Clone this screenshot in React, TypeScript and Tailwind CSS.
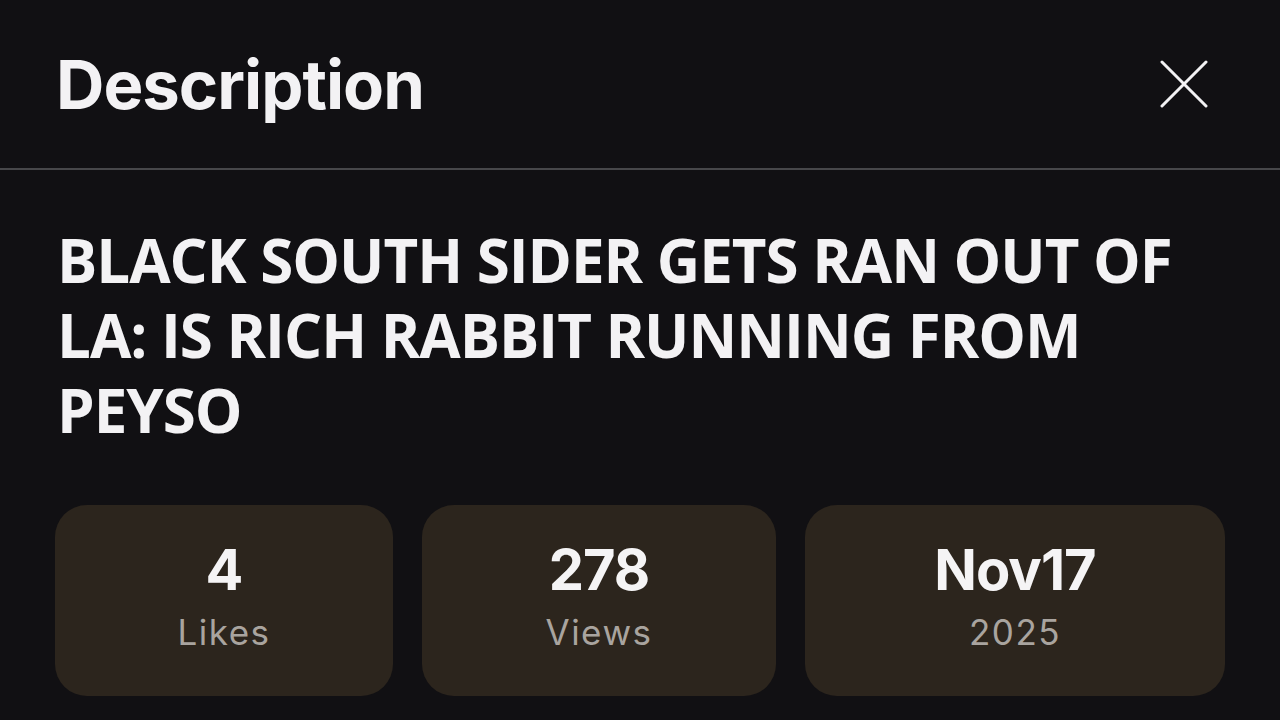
import React from "react";

const stats = [
  { value: "4", label: "Likes", w: "w-[338px]" },
  { value: "278", label: "Views", w: "w-[354px]" },
  { value: "Nov17", label: "2025", w: "w-[420px]" },
];

export default function App() {
  return (
    <div className="w-[1280px] h-[720px] overflow-hidden bg-[#111013] text-[#f3f2f4]">
      <header className="h-[168px] flex items-center justify-between pl-[56px] pr-[72px]">
        <h1
          className="text-[67px] font-bold tracking-[-1px] leading-none"
          style={{ fontFamily: "Inter, 'Liberation Sans', sans-serif" }}
        >
          Description
        </h1>
        <svg width="48" height="48" viewBox="0 0 48 48" fill="none" stroke="#f3f2f4" strokeWidth="3" strokeLinecap="round">
          <path d="M2 2 L46 46 M46 2 L2 46" />
        </svg>
      </header>
      <div className="h-[2px] bg-[#47474a]" />
      <div className="pl-[57px] pr-[40px] pt-[53px]">
        <h2
          className="text-[60px] font-bold leading-[75px] tracking-[-1px]"
          style={{ fontFamily: "'Open Sans', 'Noto Sans', sans-serif" }}
        >
          BLACK SOUTH SIDER GETS RAN OUT OF LA: IS RICH RABBIT RUNNING FROM PEYSO
        </h2>
        <div className="mt-[57px] flex gap-[29px] -ml-[2px]">
          {stats.map((s) => (
            <div
              key={s.label}
              className={`${s.w} h-[191px] rounded-[32px] bg-[#2c251d] flex flex-col items-center justify-center pb-[10px]`}
              style={{ fontFamily: "Inter, 'Liberation Sans', sans-serif" }}
            >
              <div className="text-[56px] font-bold leading-none tracking-[-1px] text-[#f5f4f5]">{s.value}</div>
              <div className="mt-[17px] text-[35px] leading-none text-[#a9a49f] tracking-[1.5px]">{s.label}</div>
            </div>
          ))}
        </div>
      </div>
    </div>
  );
}
